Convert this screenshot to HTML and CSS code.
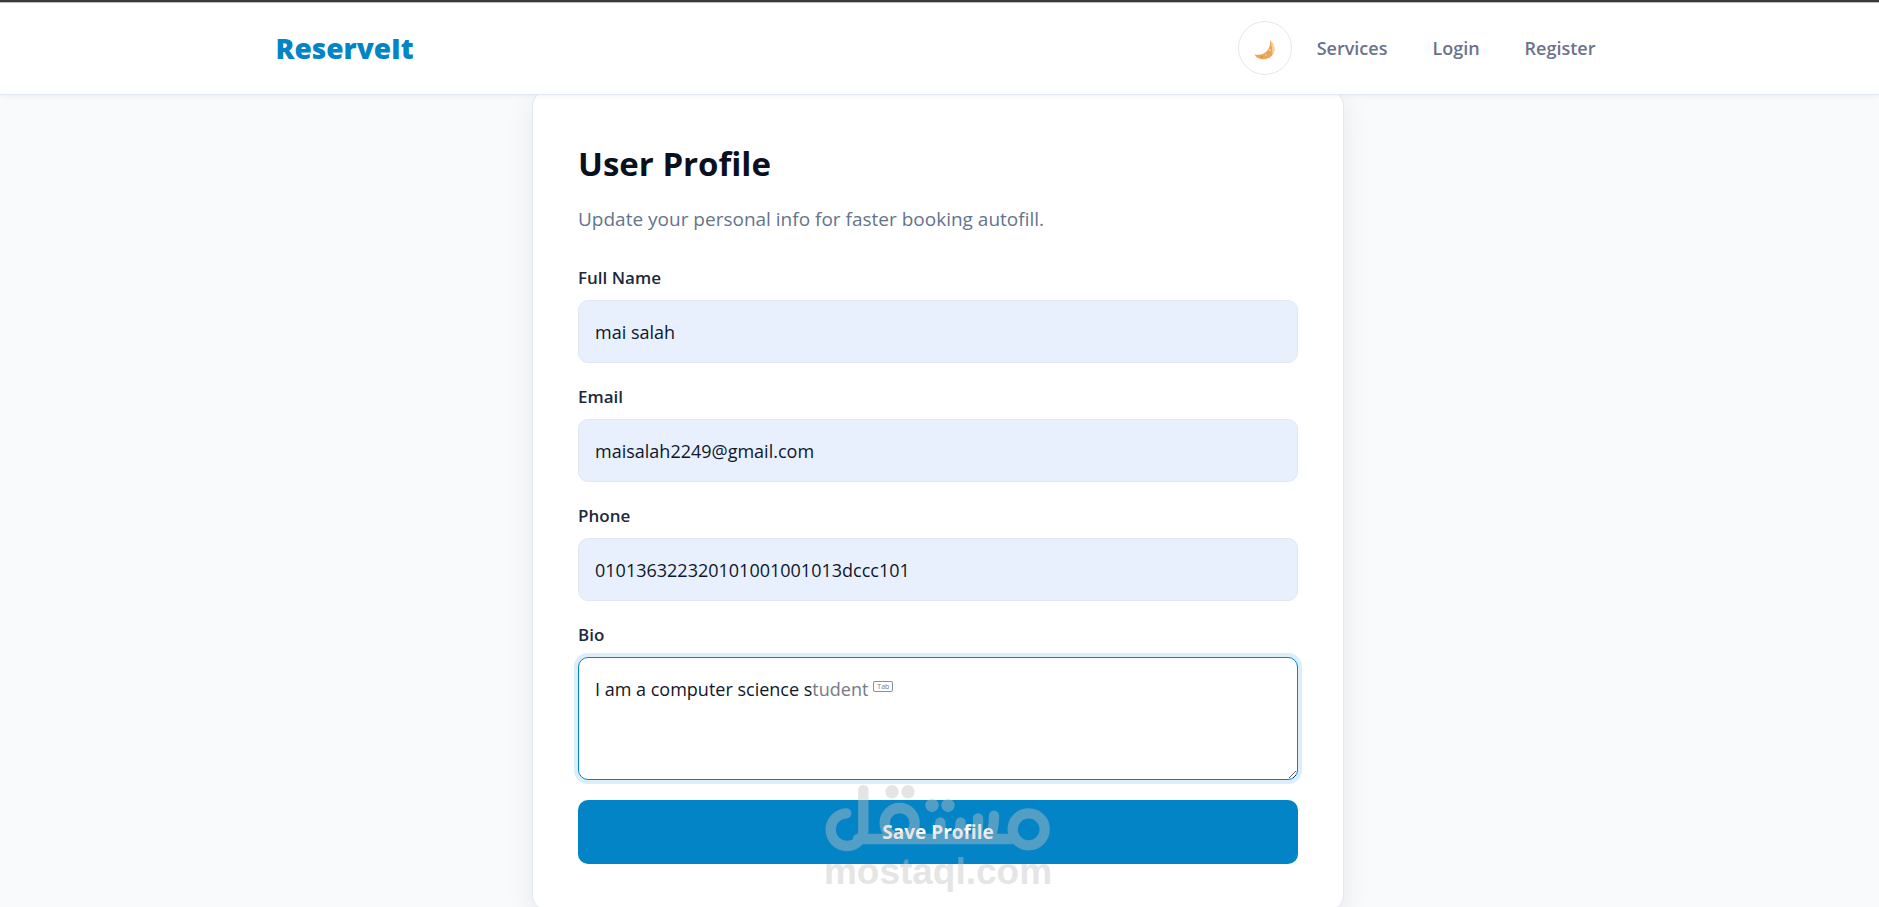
FILE: index.html
```html
<!DOCTYPE html>
<html lang="en">
<head>
  <meta charset="UTF-8">
  <meta name="viewport" content="width=device-width, initial-scale=1.0">
  <title>ReserveIt - User Profile</title>
  <link rel="stylesheet" href="styles.css">
</head>

<body>

  <header class="navbar">
    <div class="navbar-inner">
      <a href="#" class="logo">ReserveIt</a>
      <nav class="nav-links">
        <button type="button" class="theme-toggle" aria-label="Toggle dark mode">
          <svg width="22" height="20" viewBox="0 0 22 20">
            <path d="M16 0C21 5 22 11 18 15.500C14 20.500 4 21 0.500 14.500C6 15.500 10.500 14 13 11C15.500 8 16.500 4.500 16 0Z" fill="#e9a65b"/>
            <path d="M16 0C21 5 22 11 18 15.500C19 10.500 18 5 16 0Z" fill="#f7d694"/>
            <circle cx="16" cy="10" r="1" fill="#f7cf8c"/>
            <circle cx="12" cy="15" r="1" fill="#f3bf78"/>
            <circle cx="8" cy="17" r="1" fill="#d98a45"/>
          </svg>
        </button>
        <a href="#">Services</a>
        <a href="#">Login</a>
        <a href="#">Register</a>
      </nav>
    </div>
  </header>

  <main class="page">
    <section class="card">
      <h1>User Profile</h1>
      <p class="subtitle">Update your personal info for faster booking autofill.</p>

      <form id="profile-form" class="profile-form">
        <div class="form-group">
          <label for="name">Full Name</label>
          <input type="text" id="name" name="name" class="autofilled" value="mai salah">
        </div>
        <div class="form-group">
          <label for="email">Email</label>
          <input type="email" id="email" name="email" class="autofilled" value="maisalah2249@gmail.com">
        </div>
        <div class="form-group">
          <label for="phone">Phone</label>
          <input type="text" id="phone" name="phone" class="autofilled" value="010136322320101001001013dccc101">
        </div>
        <div class="form-group">
          <label for="bio">Bio</label>
          <div class="bio-box">
            <textarea id="bio" name="bio" class="active" spellcheck="false">I am a computer science s</textarea>
            <div class="suggestion" aria-hidden="true"><span class="typed">I am a computer science s</span>tudent<kbd>Tab</kbd></div>
          </div>
        </div>
        <button type="submit" class="save-btn">Save Profile</button>
      </form>

      <div class="watermark">
        <svg width="230" height="70" viewBox="75 70 690 210" role="img" aria-label="مستقل">
          <g fill="none" stroke="#c3c3c3" stroke-width="31" stroke-linecap="round">
            <path d="M145 161A49 49 0 1 0 196 210V91"/>
            <path d="M180 238H640"/>
            <circle cx="305" cy="190" r="45"/>
            <path d="M427 188V238"/>
            <path d="M488 188Q488 215 478 238"/>
            <path d="M540 176Q542 212 532 238"/>
            <path d="M588 168Q588 212 574 238"/>
            <circle cx="692" cy="209" r="48"/>
          </g>
          <g fill="#c3c3c3">
            <circle cx="282" cy="96" r="20"/>
            <circle cx="330" cy="96" r="20"/>
            <circle cx="402" cy="137" r="20"/>
            <circle cx="450" cy="137" r="20"/>
          </g>
        </svg>
        <span>mostaql.com</span>
      </div>
    </section>
  </main>

</body>
</html>
```

FILE: styles.css
```css
* {
  box-sizing: border-box;
}

body {
  margin: 0;
  height: 100vh;
  overflow: hidden;
  background-color: #f8fafc;
  border-top: 2px solid #3b3838;
  font-family: "Segoe UI", "Open Sans", "Noto Sans", sans-serif;
  font-size: 17px;
  color: #1e293b;
}

/* Navbar */
.navbar {
  position: relative;
  z-index: 10;
  background-color: #ffffff;
  border-top: 1px solid #bdbcbc;
  border-bottom: 1px solid #e2e8f0;
  box-shadow: 0 1px 6px rgba(15, 23, 42, 0.06);
  padding: 18px 24px 19px;
}

.navbar-inner {
  max-width: 1328px;
  margin: 0 auto;
  display: flex;
  justify-content: space-between;
  align-items: center;
}

.logo {
  font-size: 28px;
  font-weight: 800;
  color: #0284c7;
  text-decoration: none;
}

.nav-links {
  display: flex;
  align-items: center;
  gap: 45px;
  padding-right: 8px;
}

.nav-links a {
  color: #6b728c;
  font-size: 18px;
  font-weight: 600;
  text-decoration: none;
}

.theme-toggle {
  width: 54px;
  height: 54px;
  margin-right: -20px;
  padding: 4px 0 0;
  display: flex;
  align-items: center;
  justify-content: center;
  background-color: #ffffff;
  border: 1px solid #e2e8f0;
  border-radius: 50%;
  cursor: pointer;
}

/* Profile card */
.page {
  padding-right: 3px;
}

.card {
  position: relative;
  max-width: 812px;
  margin: -4px auto 0;
  padding: 45px;
  background-color: #ffffff;
  border: 1px solid #e2e8f0;
  border-radius: 14px;
  box-shadow: 0 8px 28px rgba(15, 23, 42, 0.08);
}

h1 {
  margin: 0 0 12px;
  font-size: 33px;
  line-height: 54px;
  font-weight: 700;
  color: #0b1021;
}

.subtitle {
  margin: 0 0 29px;
  font-size: 19px;
  line-height: 32px;
  color: #64748b;
}

.profile-form {
  display: flex;
  flex-direction: column;
  gap: 20px;
}

.form-group label {
  display: block;
  margin-bottom: 8px;
  line-height: 28px;
  font-weight: 600;
}

.form-group input,
.form-group textarea {
  display: block;
  width: 100%;
  padding: 16px;
  border: 1px solid #e2e8f0;
  border-radius: 10px;
  background-color: #ffffff;
  font-family: inherit;
  font-size: 18px;
  line-height: 30px;
  color: #0f172a;
}

.form-group input {
  height: 63px;
}

.form-group input.autofilled {
  background-color: #e8f0fe;
}

.form-group textarea {
  height: 123px;
  resize: vertical;
}

.form-group textarea:focus,
.form-group textarea.active {
  outline: none;
  border-color: #0284c7;
  box-shadow: 0 0 0 4px #dbeefa;
}

/* Inline suggestion after the typed text */
.bio-box {
  position: relative;
}

.suggestion {
  position: absolute;
  top: 0;
  left: 0;
  padding: 17px;
  font-size: 18px;
  line-height: 30px;
  color: #757b88;
  pointer-events: none;
}

.suggestion .typed {
  visibility: hidden;
}

.suggestion kbd {
  display: inline-block;
  margin-left: 5px;
  padding: 0 3px;
  border: 1px solid #8b8f9a;
  border-radius: 2px;
  font-family: inherit;
  font-size: 7px;
  line-height: 9px;
  vertical-align: 7px;
}

.save-btn {
  height: 64px;
  border: none;
  border-radius: 10px;
  background-color: #0284c7;
  color: #ffffff;
  font-family: inherit;
  font-size: 19px;
  font-weight: 700;
  cursor: pointer;
}

.save-btn:hover {
  background-color: #0369a1;
}

/* Watermark */
.watermark {
  position: absolute;
  left: 0;
  right: 0;
  bottom: 19px;
  display: flex;
  flex-direction: column;
  align-items: center;
  opacity: 0.42;
  pointer-events: none;
}

.watermark span {
  font-family: "Liberation Sans", Arial, sans-serif;
  font-size: 37px;
  font-weight: 700;
  line-height: 37px;
  color: #c3c3c3;
}
```
